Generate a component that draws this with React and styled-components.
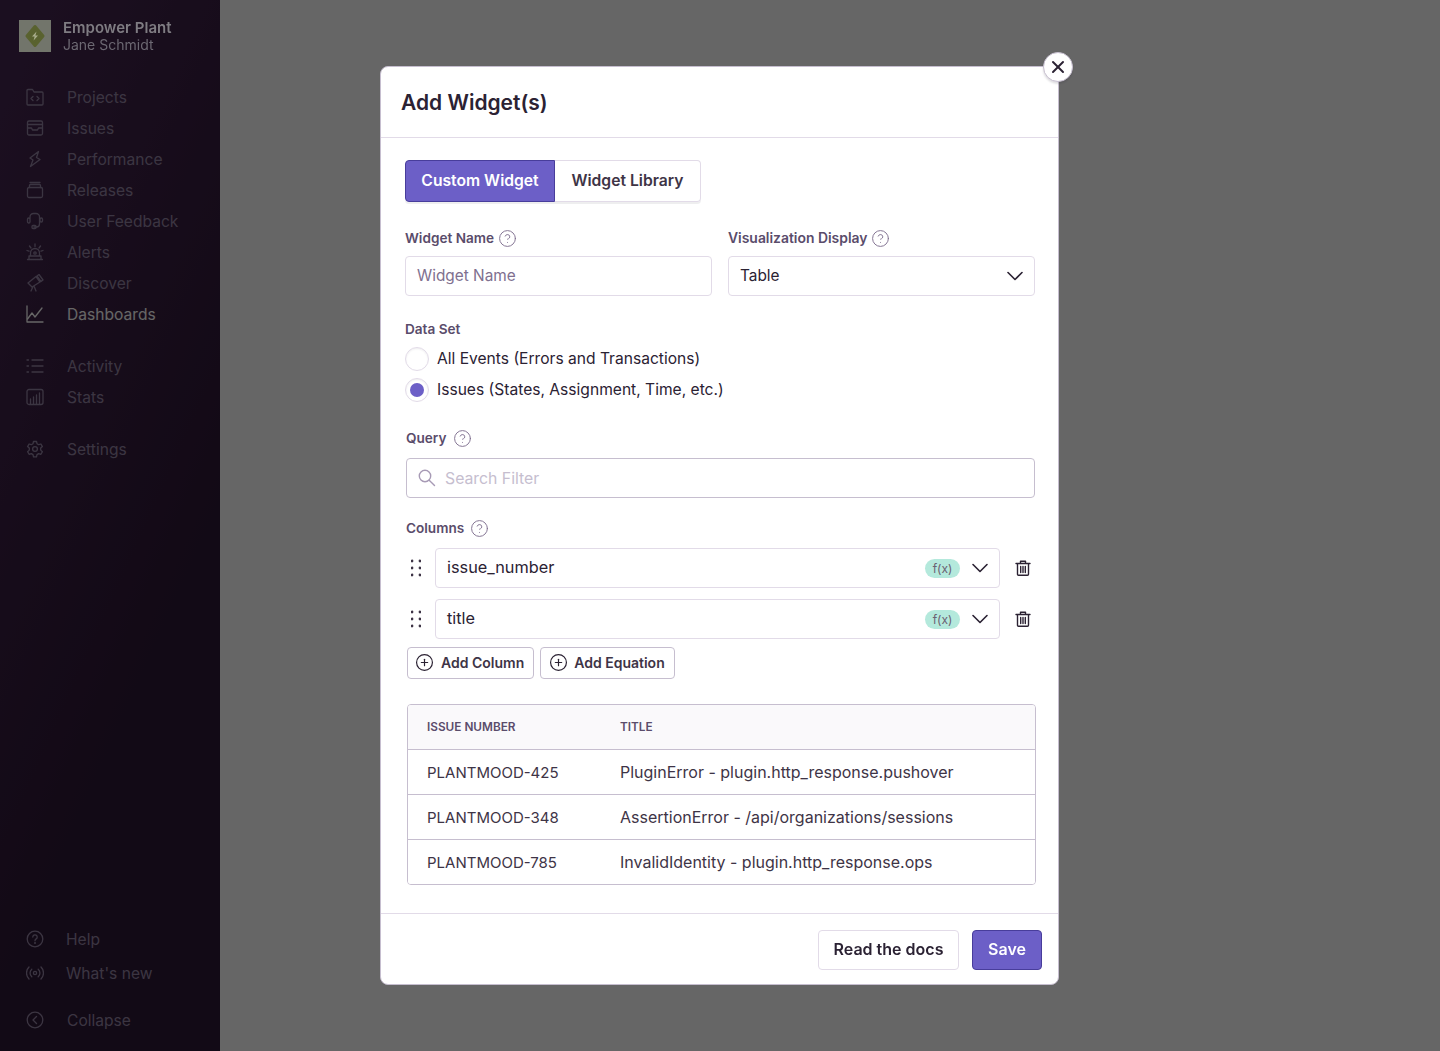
import React from 'react';
import styled, { createGlobalStyle } from 'styled-components';
import { ChevronDown, CirclePlus, CircleHelp, X } from 'lucide-react';

const GlobalStyle = createGlobalStyle`
  html, body { margin: 0; padding: 0; height: 100%; background: #fff; }
  body { font-family: Inter, "Noto Sans", sans-serif; color: #2b2233; }
  * { box-sizing: border-box; }
`;

const Page = styled.div`
  display: flex;
  height: 1051px;
  overflow: hidden;
`;

const Sidebar = styled.aside`
  width: 220px;
  flex: none;
  display: flex;
  flex-direction: column;
  padding: 20px 0 0;
  background: linear-gradient(294.17deg, #2f1937 35.57%, #452650 92.42%);
`;

const OrgHeader = styled.div`
  position: relative;
  z-index: 1;
  display: flex;
  align-items: center;
  gap: 12px;
  height: 32px;
  padding-left: 19px;
  margin-bottom: 32px;
`;

const OrgText = styled.div`
  display: flex;
  flex-direction: column;
`;

const OrgName = styled.div`
  font-size: 15px;
  line-height: 17px;
  font-weight: 600;
  color: #7f7c82;
`;

const OrgUser = styled.div`
  font-size: 14px;
  line-height: 17px;
  color: #6c6872;
`;

const NavGroup = styled.nav`
  display: flex;
  flex-direction: column;
  gap: ${p => p.$spacing || 5}px;
  margin-bottom: ${p => p.$after || 0}px;
`;

const NavItem = styled.div`
  display: flex;
  align-items: center;
  height: 26px;
  padding-left: 26px;
  gap: ${p => p.$gap || 23}px;
  font-size: 15.6px;
  color: ${p => (p.$active ? '#fff' : '#9586a5')};
  svg { flex: none; }
`;

const Spacer = styled.div`
  flex: 1;
`;

const Backdrop = styled.div`
  position: fixed;
  inset: 0;
  background: rgba(0, 0, 0, 0.6);
  display: flex;
  justify-content: center;
  align-items: flex-start;
  padding: 66px 1px 0 0;
`;

const Modal = styled.div`
  position: relative;
  width: 679px;
  height: 919px;
  background: #fff;
  border: 1px solid #c6becf;
  border-radius: 8px;
  display: flex;
  flex-direction: column;
`;

const CloseButton = styled.button`
  position: absolute;
  top: -15px;
  right: -15px;
  width: 30px;
  height: 30px;
  padding: 0;
  border-radius: 50%;
  border: 1px solid #c6becf;
  background: #fff;
  color: #2b2233;
  display: flex;
  align-items: center;
  justify-content: center;
  box-shadow: 0 2px 2px rgba(43, 34, 51, 0.15);
`;

const ModalHeader = styled.header`
  height: 71px;
  flex: none;
  display: flex;
  align-items: center;
  padding-left: 20px;
  border-bottom: 1px solid #e2dbe8;
`;

const Title = styled.h2`
  margin: 0;
  font-size: 21px;
  font-weight: 600;
  color: #2b2233;
`;

const ModalBody = styled.div`
  padding: 22px 23px 0 24px;
  display: flex;
  flex-direction: column;
  flex: 1;
`;

const Tabs = styled.div`
  display: flex;
  align-self: flex-start;
  height: 42px;
  border-radius: 4px;
  box-shadow: 0 2px 0 rgba(43, 34, 51, 0.08);
`;

const Tab = styled.div`
  display: flex;
  align-items: center;
  justify-content: center;
  width: ${p => p.$width}px;
  padding-bottom: 2px;
  font-size: 15.7px;
  font-weight: 600;
  border: 1px solid ${p => (p.$active ? '#483d9b' : '#e2dbe8')};
  border-left-width: ${p => (p.$active ? 1 : 0)}px;
  border-radius: ${p => (p.$active ? '4px 0 0 4px' : '0 4px 4px 0')};
  background: ${p => (p.$active ? '#6c5fc7' : '#fff')};
  color: ${p => (p.$active ? '#fff' : '#3e3446')};
`;

const TwoColumns = styled.div`
  display: grid;
  grid-template-columns: 307px 307px;
  column-gap: 16px;
  margin-top: 28px;
`;

const Field = styled.div`
  display: flex;
  flex-direction: column;
`;

const Label = styled.label`
  display: flex;
  align-items: center;
  height: 16px;
  gap: ${p => p.$gap || 0}px;
  margin-top: ${p => p.$top || 0}px;
  margin-left: ${p => p.$indent || 0}px;
  margin-bottom: ${p => p.$bottom || 10}px;
  font-size: ${p => p.$size || 13.6}px;
  font-weight: 600;
  color: #5a4c6b;
  svg { color: #80708f; flex: none; }
`;

const Box = styled.div`
  height: 40px;
  display: flex;
  align-items: center;
  padding: 0 5px 0 11px;
  border: 1px solid ${p => p.$border || '#e2dbe8'};
  border-radius: 4px;
  font-size: 16px;
  background: #fff;
  color: ${p => p.$color || '#2b2233'};
`;

const BoxText = styled.span`
  margin-bottom: 2px;
  font-size: ${p => p.$size || 16}px;
`;

const Grow = styled.span`
  flex: 1;
`;

const RadioRow = styled.div`
  display: flex;
  align-items: center;
  gap: 8px;
  height: 24px;
  margin-bottom: 7px;
  font-size: 15.6px;
  color: #2b2233;
`;

const RadioText = styled.span`
  margin-bottom: 2px;
`;

const Radio = styled.span`
  width: 24px;
  height: 24px;
  flex: none;
  border-radius: 50%;
  border: 1px solid #e2dbe8;
  box-shadow: inset 0 1px 2px rgba(43, 34, 51, 0.08);
  display: flex;
  align-items: center;
  justify-content: center;
  &::after {
    content: '';
    display: ${p => (p.$checked ? 'block' : 'none')};
    width: 14px;
    height: 14px;
    border-radius: 50%;
    background: #6c5fc7;
  }
`;

const SearchBox = styled(Box)`
  margin-left: 1px;
  gap: 9px;
  font-size: 15.8px;
  svg { color: #a79ab5; }
`;

const ColumnList = styled.div`
  display: flex;
  flex-direction: column;
  gap: 11px;
`;

const ColumnRow = styled.div`
  display: grid;
  grid-template-columns: 30px 565px 31px;
  align-items: center;
`;

const Grip = styled.span`
  display: flex;
  padding-left: 6px;
  color: #3e3446;
`;

const FxBadge = styled.span`
  width: 35px;
  height: 19px;
  margin-right: 6px;
  border-radius: 10px;
  background: #b4e9dc;
  color: #6b6272;
  font-size: 12px;
  display: flex;
  align-items: center;
  justify-content: center;
`;

const TrashButton = styled.span`
  display: flex;
  justify-content: flex-end;
  color: #2b2233;
`;

const AddRow = styled.div`
  display: flex;
  gap: 6px;
  margin: 8px 0 0 2px;
`;

const AddButton = styled.div`
  height: 32px;
  display: flex;
  align-items: center;
  gap: 6.6px;
  padding: 0 9px 1px 7.4px;
  border: 1px solid #c6becf;
  border-radius: 4px;
  font-size: 14px;
  font-weight: 600;
  color: #3e3446;
  svg { color: #2b2233; }
`;

const Table = styled.div`
  margin: 25px -1px 0 2px;
  border: 1px solid #c6becf;
  border-radius: 4px;
  overflow: hidden;
`;

const TableRow = styled.div`
  display: grid;
  grid-template-columns: 193px 1fr;
  align-items: center;
  height: ${p => (p.$head ? 44 : 45)}px;
  padding-left: 19px;
  border-top: ${p => (p.$head ? 'none' : '1px solid #c6becf')};
  background: ${p => (p.$head ? '#faf9fb' : '#fff')};
  font-size: ${p => (p.$head ? '11.8px' : '16px')};
  font-weight: ${p => (p.$head ? 600 : 400)};
  color: ${p => (p.$head ? '#5a4c6b' : '#3e3446')};
  text-transform: ${p => (p.$head ? 'uppercase' : 'none')};
`;

const IssueId = styled.span`
  font-size: 15px;
`;

const ModalFooter = styled.footer`
  height: 71px;
  flex: none;
  display: flex;
  justify-content: flex-end;
  gap: 13px;
  padding: 16px 16px 0 0;
  border-top: 1px solid #e2dbe8;
`;

const FooterButton = styled.div`
  height: 40px;
  display: flex;
  align-items: center;
  justify-content: center;
  width: ${p => p.$width}px;
  padding-bottom: 2px;
  border: 1px solid ${p => (p.$primary ? '#483d9b' : '#e2dbe8')};
  border-radius: 4px;
  font-size: 16px;
  font-weight: 600;
  background: ${p => (p.$primary ? '#6c5fc7' : '#fff')};
  color: ${p => (p.$primary ? '#fff' : '#2b2233')};
`;

const Svg = ({ children, size = 18, sw = 1.3 }) => (
  <svg width={size} height={size} viewBox="0 0 18 18" fill="none" stroke="currentColor" strokeWidth={sw} strokeLinecap="round" strokeLinejoin="round">
    {children}
  </svg>
);

const Logo = () => (
  <svg width="32" height="32" viewBox="0 0 32 32">
    <rect width="32" height="32" fill="#72756b" />
    <path d="M16 6.5 24 16l-8 9.5L8 16z" fill="#59622f" stroke="#59622f" strokeWidth="3" strokeLinejoin="round" />
    <path d="M17.5 11.5 13 16.6h2.6l-1 4 4.4-5.2h-2.6z" fill="#a9ad8c" />
  </svg>
);

const ProjectsIcon = () => (
  <Svg><path d="M1 2.5a1 1 0 0 1 1-1h4.5L8 4h8a1 1 0 0 1 1 1v11a1 1 0 0 1-1 1H2a1 1 0 0 1-1-1z" /><path d="M7 8.5 5 10.5l2 2M11 8.5l2 2-2 2" /></Svg>
);
const IssuesIcon = () => (
  <Svg><rect x="1.5" y="2" width="15" height="14" rx="1.5" /><path d="M1.5 5.5h15M1.5 9h4l1 2h5l1-2h4" /></Svg>
);
const PerformanceIcon = () => (
  <Svg><path d="M12.5 1.5 4 8l3 2-2.5 6.5L14 9.5l-3.5-2z" /></Svg>
);
const ReleasesIcon = () => (
  <Svg><rect x="1.5" y="6.5" width="15" height="10" rx="1.5" /><path d="M3.5 6.5v-2a1 1 0 0 1 1-1h9a1 1 0 0 1 1 1v2M4 1.5h10" /></Svg>
);
const FeedbackIcon = () => (
  <Svg><path d="M4 6V5a3.5 3.5 0 0 1 3.5-3.5h2.5A3.5 3.5 0 0 1 13.5 5v7a3 3 0 0 1-3 3H8" /><rect x="1.5" y="6" width="2.5" height="5" rx="1.2" /><rect x="14" y="6" width="2.5" height="4" rx="1.2" /><rect x="6" y="13.5" width="4" height="3" rx="1" /></Svg>
);
const AlertsIcon = () => (
  <Svg><path d="M4.5 13V10a4.5 4.5 0 0 1 9 0v3M1.5 16.5h15M3 13h12v3.5H3zM9 1v2.5M3.5 3l1.5 2M14.5 3 13 5M1 7.5l2 .7M17 7.5l-2 .7" /><circle cx="9" cy="10" r="1.2" /></Svg>
);
const DiscoverIcon = () => (
  <Svg><path d="m2 9 8-6.5 4 5.5-8 5zM11 2l4 5.5 2-1.5-4-5.5zM8 12l2 5M7 12.5 5 17" /></Svg>
);
const DashboardsIcon = () => (
  <Svg><path d="M1 1v16h16" /><path d="M1.5 14 6 8l3 4 7-9" /></Svg>
);
const ActivityIcon = () => (
  <Svg><path d="M1 3h1.5M1 9h1.5M1 15h1.5M6 3h11M6 9h11M6 15h11" /></Svg>
);
const StatsIcon = () => (
  <Svg><rect x="1" y="1.5" width="16" height="15" rx="2" /><path d="M4.5 16v-5M7.5 16V9M10.5 16V7M13.5 16V5" /></Svg>
);
const SettingsIcon = () => (
  <Svg><path d="M7.5 1.5h3l.5 2.2 1.7 1 2.2-.7 1.5 2.6-1.7 1.5v2l1.7 1.6-1.5 2.6-2.2-.7-1.7 1-.5 2.2h-3L7 14.6l-1.7-1-2.2.7-1.5-2.6 1.7-1.6v-2L1.6 6.6 3.1 4l2.2.7 1.7-1z" /><circle cx="9" cy="9" r="2.4" /></Svg>
);
const HelpIcon = () => (
  <Svg><circle cx="9" cy="9" r="7.8" /><path d="M6.8 7a2.2 2.2 0 1 1 3.4 1.9c-.8.5-1.2 1-1.2 1.9" /><circle cx="9" cy="13" r=".4" /></Svg>
);
const BroadcastIcon = () => (
  <Svg><circle cx="9" cy="9" r="1.6" /><path d="M5.8 5.2a5 5 0 0 0 0 7.6M12.2 5.2a5 5 0 0 1 0 7.6M3 3a8.5 8.5 0 0 0 0 12M15 3a8.5 8.5 0 0 1 0 12" /></Svg>
);
const CollapseIcon = () => (
  <Svg><circle cx="9" cy="9" r="7.8" /><path d="M10.5 5.5 7 9l3.5 3.5" /></Svg>
);

const SearchIcon = () => (
  <Svg sw={1.4}><circle cx="7" cy="7" r="5.7" /><path d="m11.2 11.2 5.3 5.3" /></Svg>
);

const GripIcon = () => (
  <svg width="10" height="18" viewBox="0 0 10 18" fill="currentColor">
    {[2, 9, 16].map(y => [1, 9].map(x => <circle key={`${x}-${y}`} cx={x} cy={y} r="1.4" />))}
  </svg>
);

const TrashIcon = () => (
  <svg width="16" height="16" viewBox="0 0 16 16" fill="none" stroke="currentColor" strokeWidth="1.4" strokeLinecap="round" strokeLinejoin="round">
    <path d="M1 3.5h14M5.5 3.5V1.2h5v2.3M2.5 3.5v10.8a1 1 0 0 0 1 1h9a1 1 0 0 0 1-1V3.5M5.7 6.5v6M8 6.5v6M10.3 6.5v6" />
  </svg>
);

const Help = () => <CircleHelp size={19} strokeWidth={1.2} />;
const Chevron = () => <ChevronDown size={28} strokeWidth={1.4} />;

const mainNav = [
  ['Projects', ProjectsIcon],
  ['Issues', IssuesIcon],
  ['Performance', PerformanceIcon],
  ['Releases', ReleasesIcon],
  ['User Feedback', FeedbackIcon],
  ['Alerts', AlertsIcon],
  ['Discover', DiscoverIcon],
  ['Dashboards', DashboardsIcon, true],
];

const rows = [
  ['PLANTMOOD-425', 'PluginError - plugin.http_response.pushover'],
  ['PLANTMOOD-348', 'AssertionError - /api/organizations/sessions'],
  ['PLANTMOOD-785', 'InvalidIdentity - plugin.http_response.ops'],
];

export default function App() {
  return (
    <Page>
      <GlobalStyle />
      <Sidebar>
        <OrgHeader>
          <Logo />
          <OrgText>
            <OrgName>Empower Plant</OrgName>
            <OrgUser>Jane Schmidt</OrgUser>
          </OrgText>
        </OrgHeader>
        <NavGroup $after={26}>
          {mainNav.map(([name, Icon, active]) => (
            <NavItem key={name} $active={active}><Icon />{name}</NavItem>
          ))}
        </NavGroup>
        <NavGroup $after={26}>
          <NavItem><ActivityIcon />Activity</NavItem>
          <NavItem><StatsIcon />Stats</NavItem>
        </NavGroup>
        <NavGroup>
          <NavItem><SettingsIcon />Settings</NavItem>
        </NavGroup>
        <Spacer />
        <NavGroup $spacing={8} $after={21}>
          <NavItem $gap={22}><HelpIcon />Help</NavItem>
          <NavItem $gap={22}><BroadcastIcon />What's new</NavItem>
        </NavGroup>
        <NavGroup $after={18}>
          <NavItem><CollapseIcon />Collapse</NavItem>
        </NavGroup>
      </Sidebar>
      <Backdrop>
        <Modal>
          <CloseButton><X size={20} strokeWidth={2.4} /></CloseButton>
          <ModalHeader>
            <Title>Add Widget(s)</Title>
          </ModalHeader>
          <ModalBody>
            <Tabs>
              <Tab $active $width={150}>Custom Widget</Tab>
              <Tab $width={146}>Widget Library</Tab>
            </Tabs>
            <TwoColumns>
              <Field>
                <Label $gap={4.4}>Widget Name<Help /></Label>
                <Box $color="#80708f"><BoxText $size={15.4}>Widget Name</BoxText></Box>
              </Field>
              <Field>
                <Label $gap={3.4} $size={13.9}>Visualization Display<Help /></Label>
                <Box><BoxText $size={15.4}>Table</BoxText><Grow /><Chevron /></Box>
              </Field>
            </TwoColumns>
            <Label $top={25}>Data Set</Label>
            <RadioRow><Radio /><RadioText>All Events (Errors and Transactions)</RadioText></RadioRow>
            <RadioRow><Radio $checked /><RadioText>Issues (States, Assignment, Time, etc.)</RadioText></RadioRow>
            <Label $top={21} $indent={1} $bottom={12} $gap={6.4}>Query<Help /></Label>
            <SearchBox $border="#c6becf" $color="#c6becf"><SearchIcon />Search Filter</SearchBox>
            <Label $top={22} $indent={1} $bottom={12} $gap={5.4}>Columns<Help /></Label>
            <ColumnList>
              {['issue_number', 'title'].map(name => (
                <ColumnRow key={name}>
                  <Grip><GripIcon /></Grip>
                  <Box>
                    <BoxText $size={16.3}>{name}</BoxText>
                    <Grow />
                    <FxBadge>f(x)</FxBadge>
                    <Chevron />
                  </Box>
                  <TrashButton><TrashIcon /></TrashButton>
                </ColumnRow>
              ))}
            </ColumnList>
            <AddRow>
              <AddButton><CirclePlus size={19} strokeWidth={1.5} />Add Column</AddButton>
              <AddButton><CirclePlus size={19} strokeWidth={1.5} />Add Equation</AddButton>
            </AddRow>
            <Table>
              <TableRow $head><span>Issue Number</span><span>Title</span></TableRow>
              {rows.map(([id, title]) => (
                <TableRow key={id}><IssueId>{id}</IssueId><span>{title}</span></TableRow>
              ))}
            </Table>
          </ModalBody>
          <ModalFooter>
            <FooterButton $width={141}>Read the docs</FooterButton>
            <FooterButton $primary $width={70}>Save</FooterButton>
          </ModalFooter>
        </Modal>
      </Backdrop>
    </Page>
  );
}
